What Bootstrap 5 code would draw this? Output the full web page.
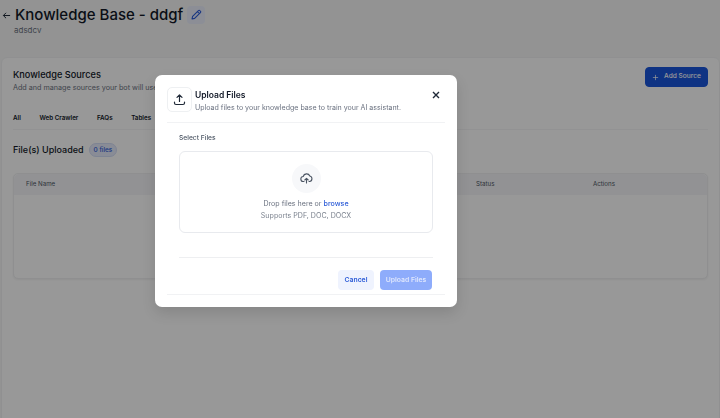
<!DOCTYPE html>
<html lang="en">
<head>
<meta charset="utf-8">
<title>Knowledge Base</title>
<link href="https://cdn.jsdelivr.net/npm/bootstrap@5.3.0/dist/css/bootstrap.min.css" rel="stylesheet">
<style>
html,body{height:418px;overflow:hidden}
body{font-family:Inter,"Liberation Sans",sans-serif;background:#f5f6f6;color:#111827;position:relative}
.kb-head{padding:4px 0 0 2px;height:57px}
.kb-back{width:9px;height:9px;color:#1f2937;margin-top:1px}
.kb-title{font-size:15px;font-weight:500;line-height:22px;margin:0}
.kb-edit{width:18px;height:18px;border-radius:4px;background:#e9edfb;color:#2b5bd7}
.kb-sub{font-size:8px;color:#6b7280;padding-left:12px;line-height:10px;margin-top:-1px}
.kb-panel{height:380px;margin-left:1px;border:1px solid #f0f1f2;border-radius:6px;background:#fdfdfd;padding:11px 11px 0 11px}
.kb-h2{font-size:9.2px;font-weight:500;line-height:12px;margin:0}
.kb-desc{font-size:7.2px;color:#6b7280;line-height:10px;margin-top:2px}
.kb-add{background:#1a56db;border:1px solid #1a56db;color:#fff;font-size:6.6px;font-weight:500;height:20px;width:63px;border-radius:4px;padding:0;margin-top:-2px;gap:5px}
.kb-tabs{margin-top:21px;gap:18.6px;font-size:6.25px;font-weight:600;height:16px;line-height:9px;border-bottom:1px solid #f3f4f5}
.kb-files{margin-top:13px;gap:5px}
.kb-h3{font-size:9px;font-weight:500;margin:0;line-height:14px}
.kb-count{font-size:6.4px;font-weight:500;color:#2b5bd7;background:#e4e9fa;border:1px solid #d3dcf5;border-radius:8px;padding:0 4px;height:14px;line-height:12px}
.kb-table{margin-top:16px;height:106px;border:1px solid #eeeff1;border-radius:5px;background:#fdfdfd;font-size:6.2px;color:#4b5563;box-shadow:0 1px 2px rgba(0,0,0,.05)}
.kb-thead{background:#f3f4f7;height:21px;border-radius:5px 5px 0 0;position:relative}
.kb-th{position:absolute;top:5px;line-height:10px}
.kb-shade{position:absolute;inset:0;background:rgba(0,0,0,.4);backdrop-filter:blur(.35px)}
.kb-modal{position:absolute;left:155px;top:75px;width:302px;height:232px;background:#fff;border-radius:7px;padding:12px;box-shadow:0 6px 14px rgba(0,0,0,.12);display:flex;flex-direction:column}
.kb-mhead{height:36px;gap:3px;border-bottom:1px solid #f1f2f4}
.kb-micon{width:25px;height:25px;border:1px solid #eef0f2;border-radius:5px;color:#1f2937;flex:none}
.kb-mtitle{font-size:8.5px;font-weight:600;line-height:11px;margin:3px 0 0}
.kb-msub{font-size:7.05px;color:#6b7280;line-height:9px;margin-top:2px}
.kb-x{color:#1f2937;width:10px;height:10px;margin:3px 4px 0 auto;border:0;background:none;padding:0;display:flex}
.kb-body{padding:0 12px;flex:1;display:flex;flex-direction:column}
.kb-label{font-size:6.7px;font-weight:500;color:#4b5563;line-height:9px;margin-top:11px}
.kb-drop{margin-top:8px;height:82px;border:1px solid #e8eaee;border-radius:6px;color:#6b7280;font-size:7.1px}
.kb-cloud{width:29px;height:29px;border-radius:50%;background:#f7f8fa;color:#4b5563;margin-top:12px}
.kb-drop-a{margin-top:6px;line-height:10px;color:#6b7280}
.kb-drop-a span{color:#2b5bd7;font-weight:500}
.kb-drop-b{margin-top:2px;line-height:10px;color:#7b828e}
.kb-foot{margin-top:24px;border-top:1px solid #eeeff1;padding:12px 1px 0 0;gap:6px}
.kb-cancel,.kb-upload{font-size:6.8px;font-weight:600;height:20px;border-radius:4px;padding:0;border:0}
.kb-cancel{width:36px;background:#eff3fe;color:#2b5bd7}
.kb-upload{width:52px;background:#8eacfb;color:#dfe7fd}
.kb-rule{border-top:1px solid #f1f2f4;margin-top:4px}
</style>
</head>
<body>
<header class="kb-head">
  <div class="d-flex align-items-center gap-1">
    <svg class="kb-back" viewBox="0 0 10 10" fill="none" stroke="currentColor" stroke-width="1.100"><path d="M9 5H1.500M4.500 2 1.500 5l3 3"/></svg>
    <h1 class="kb-title">Knowledge Base - ddgf</h1>
    <span class="kb-edit d-flex align-items-center justify-content-center">
      <svg width="12" height="12" viewBox="0 0 12 12" fill="none" stroke="currentColor" stroke-width="1.100" stroke-linejoin="round"><path d="M2 10l.6-2.600L8.400 1.600a1 1 0 0 1 1.500 0l.5.5a1 1 0 0 1 0 1.500L4.600 9.400 2 10zM7.400 2.600l2 2"/></svg>
    </span>
  </div>
  <div class="kb-sub">adsdcv</div>
</header>
<section class="kb-panel">
  <div class="d-flex justify-content-between align-items-start">
    <div>
      <h2 class="kb-h2">Knowledge Sources</h2>
      <div class="kb-desc">Add and manage sources your bot will use to answer</div>
    </div>
    <button class="kb-add d-flex align-items-center justify-content-center" type="button">
      <svg width="7" height="7" viewBox="0 0 8 8" fill="none" stroke="currentColor" stroke-width=".8"><path d="M4 1v6M1 4h6"/></svg>Add Source
    </button>
  </div>
  <div class="kb-tabs d-flex"><span>All</span><span>Web Crawler</span><span>FAQs</span><span>Tables</span></div>
  <div class="kb-files d-flex align-items-center">
    <h3 class="kb-h3">File(s) Uploaded</h3>
    <span class="kb-count">0 files</span>
  </div>
  <div class="kb-table">
    <div class="kb-thead">
      <span class="kb-th" style="left:12px">File Name</span>
      <span class="kb-th" style="left:462px">Status</span>
      <span class="kb-th" style="left:579px">Actions</span>
    </div>
  </div>
</section>
<div class="kb-shade"></div>
<div class="kb-modal" role="dialog">
  <div class="kb-mhead d-flex align-items-start">
    <span class="kb-micon d-flex align-items-center justify-content-center">
      <svg width="13" height="13" viewBox="0 0 13 13" fill="none" stroke="currentColor" stroke-width="1.200" stroke-linecap="round" stroke-linejoin="round"><path d="M6.500 8.500V2M4 4.300 6.500 1.800 9 4.300M1.500 9v1a1.500 1.500 0 0 0 1.500 1.500h7a1.500 1.500 0 0 0 1.500-1.500V9"/></svg>
    </span>
    <div>
      <h5 class="kb-mtitle">Upload Files</h5>
      <div class="kb-msub">Upload files to your knowledge base to train your AI assistant.</div>
    </div>
    <button class="kb-x" type="button" aria-label="Close">
      <svg width="10" height="10" viewBox="0 0 10 10" fill="none" stroke="currentColor" stroke-width="1.400"><path d="M2 2l6 6M8 2 2 8"/></svg>
    </button>
  </div>
  <div class="kb-body">
    <div class="kb-label">Select Files</div>
    <div class="kb-drop d-flex flex-column align-items-center">
      <span class="kb-cloud d-flex align-items-center justify-content-center">
        <svg width="13" height="13" viewBox="0 0 13 13" fill="none" stroke="currentColor" stroke-width="1.100" stroke-linecap="round" stroke-linejoin="round"><path d="M4 9.500H3.500a2.500 2.500 0 0 1-.3-5A3.500 3.500 0 0 1 9.800 4a2.800 2.800 0 0 1-.3 5.500H9M6.500 11V6.500M4.800 8 6.500 6.300 8.200 8"/></svg>
      </span>
      <div class="kb-drop-a">Drop files here or <span>browse</span></div>
      <div class="kb-drop-b">Supports PDF, DOC, DOCX</div>
    </div>
    <div class="kb-foot d-flex justify-content-end">
      <button class="kb-cancel" type="button">Cancel</button>
      <button class="kb-upload" type="button">Upload Files</button>
    </div>
  </div>
  <div class="kb-rule"></div>
</div>
</body>
</html>
